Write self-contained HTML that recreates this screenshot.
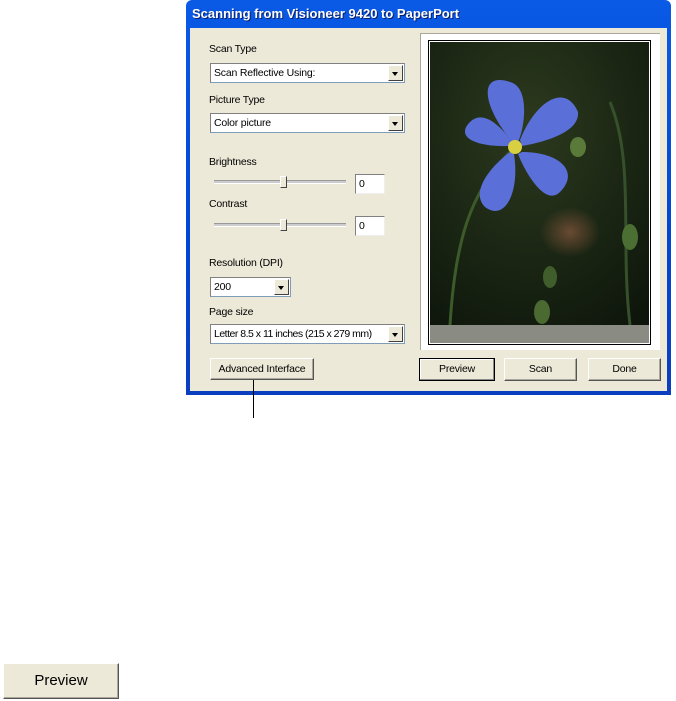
<!DOCTYPE html>
<html><head><style>
body{margin:0;width:676px;height:701px;background:#fff;position:relative;font-family:"Liberation Sans",sans-serif;font-size:10.5px;letter-spacing:-0.2px;overflow:hidden}
.a{position:absolute}
.win{left:186px;top:0;width:485px;height:395px;background:linear-gradient(#0a5ae6,#0046d5 60%,#0a3fc0);border-radius:6px 6px 0 0}
.title{left:192px;top:6px;color:#fff;font-weight:bold;font-size:13px;letter-spacing:0;text-shadow:1px 1px #0a1e6a}
.client{left:190px;top:28px;width:477px;height:363px;background:#ece9d8}
.lbl{color:#000}
.combo{background:#fff;border:1px solid #7f9db9;box-sizing:border-box;border-top-color:#808080;border-left-color:#808080;overflow:hidden;white-space:nowrap}
.combo span{position:absolute;left:3px;top:3px}
.arr{position:absolute;right:1px;top:1px;bottom:1px;width:15px;background:#ece9d8;border:1px solid #fff;border-right-color:#404040;border-bottom-color:#404040;box-sizing:border-box}
.arr:after{content:"";position:absolute;left:3px;top:6px;border:3.5px solid transparent;border-top:4px solid #000}
.edit{background:#fff;border:1px solid #808080;border-right-color:#eee;border-bottom-color:#eee;box-sizing:border-box}
.edit span{position:absolute;left:3px;top:3px}
.track{height:2px;border-top:1px solid #999;border-bottom:1px solid #fff;background:#ccc}
.thumb{width:5px;height:10px;background:#ece9d8;border:1px solid #fff;border-right-color:#444;border-bottom-color:#444}
.btn{background:#ece9d8;border:1px solid #fff;border-right-color:#555;border-bottom-color:#555;box-sizing:border-box;text-align:center;line-height:20px;box-shadow:inset -1px -1px #aca899}
</style></head><body>
<div class="a win"></div>
<div class="a title">Scanning from Visioneer 9420 to PaperPort</div>
<div class="a client"></div>

<div class="a lbl" style="left:209px;top:43px">Scan Type</div>
<div class="a combo" style="left:210px;top:63px;width:195px;height:20px"><span>Scan Reflective Using:</span><div class="arr"></div></div>
<div class="a lbl" style="left:209px;top:94px">Picture Type</div>
<div class="a combo" style="left:210px;top:113px;width:195px;height:20px"><span>Color picture</span><div class="arr"></div></div>

<div class="a lbl" style="left:209px;top:156px">Brightness</div>
<div class="a track" style="left:214px;top:180px;width:132px"></div>
<div class="a thumb" style="left:280px;top:176px"></div>
<div class="a edit" style="left:355px;top:174px;width:30px;height:20px"><span>0</span></div>

<div class="a lbl" style="left:209px;top:198px">Contrast</div>
<div class="a track" style="left:214px;top:223px;width:132px"></div>
<div class="a thumb" style="left:280px;top:219px"></div>
<div class="a edit" style="left:355px;top:216px;width:30px;height:20px"><span>0</span></div>

<div class="a lbl" style="left:209px;top:257px">Resolution (DPI)</div>
<div class="a combo" style="left:210px;top:277px;width:81px;height:20px"><span>200</span><div class="arr"></div></div>
<div class="a lbl" style="left:209px;top:306px">Page size</div>
<div class="a combo" style="left:210px;top:324px;width:195px;height:20px"><span style="letter-spacing:-0.5px">Letter 8.5 x 11 inches (215 x 279 mm)</span><div class="arr"></div></div>

<div class="a btn" style="left:210px;top:358px;width:104px;height:22px">Advanced Interface</div>
<div class="a" style="left:253px;top:380px;width:1px;height:38px;background:#000"></div>

<div class="a" style="left:420px;top:33px;width:240px;height:317px;background:#fff;border-top:1px solid #aca899;border-left:1px solid #aca899;box-sizing:border-box"></div>
<div class="a" style="left:428px;top:40px;width:223px;height:305px;border:1px solid #000;box-sizing:border-box;background:#fff"></div>
<svg class="a" style="left:430px;top:42px" width="219" height="301" viewBox="0 0 219 301">
<defs>
<radialGradient id="bg" cx="0.45" cy="0.3" r="0.9"><stop offset="0" stop-color="#2d3a1e"/><stop offset="0.5" stop-color="#1b2714"/><stop offset="1" stop-color="#0c130a"/></radialGradient>
<radialGradient id="br" cx="0.5" cy="0.5" r="0.5"><stop offset="0" stop-color="#6a4a32"/><stop offset="1" stop-color="#6a4a32" stop-opacity="0"/></radialGradient>
</defs>
<rect width="219" height="283" fill="url(#bg)"/>
<ellipse cx="140" cy="190" rx="30" ry="25" fill="url(#br)"/>
<path d="M20 283 C25 200 40 150 80 110" stroke="#3c5a2a" stroke-width="3" fill="none"/>
<path d="M200 283 C190 200 205 120 180 60" stroke="#35502a" stroke-width="3" fill="none"/>
<ellipse cx="200" cy="195" rx="8" ry="13" fill="#4b6e33"/>
<ellipse cx="112" cy="270" rx="8" ry="12" fill="#4a6a32"/>
<ellipse cx="120" cy="235" rx="7" ry="11" fill="#3f5e2c"/>
<ellipse cx="148" cy="105" rx="8" ry="10" fill="#5a7a3a"/>
<g fill="#5a6fd8">
<path d="M82 100 C50 60 50 30 80 40 C100 45 95 85 88 100Z"/>
<path d="M90 98 C105 60 135 40 148 70 C150 90 115 100 92 104Z"/>
<path d="M92 110 C130 110 150 130 130 150 C115 165 95 130 88 112Z"/>
<path d="M84 112 C90 150 75 180 55 165 C40 150 60 125 80 110Z"/>
<path d="M80 104 C45 105 25 95 40 80 C55 65 75 90 82 100Z"/>
</g>
<circle cx="85" cy="105" r="7" fill="#d8d040"/>
<rect y="283" width="219" height="18" fill="#8a8c84"/>
</svg>

<div class="a btn" style="left:419px;top:358px;width:76px;height:23px;border:1px solid #000;box-shadow:inset -1px -1px #888,inset 1px 1px #fff">Preview</div>
<div class="a btn" style="left:504px;top:358px;width:73px;height:23px">Scan</div>
<div class="a btn" style="left:588px;top:358px;width:73px;height:23px">Done</div>

<div class="a btn" style="left:3px;top:663px;width:116px;height:36px;line-height:34px;font-size:15px;letter-spacing:0">Preview</div>
</body></html>
